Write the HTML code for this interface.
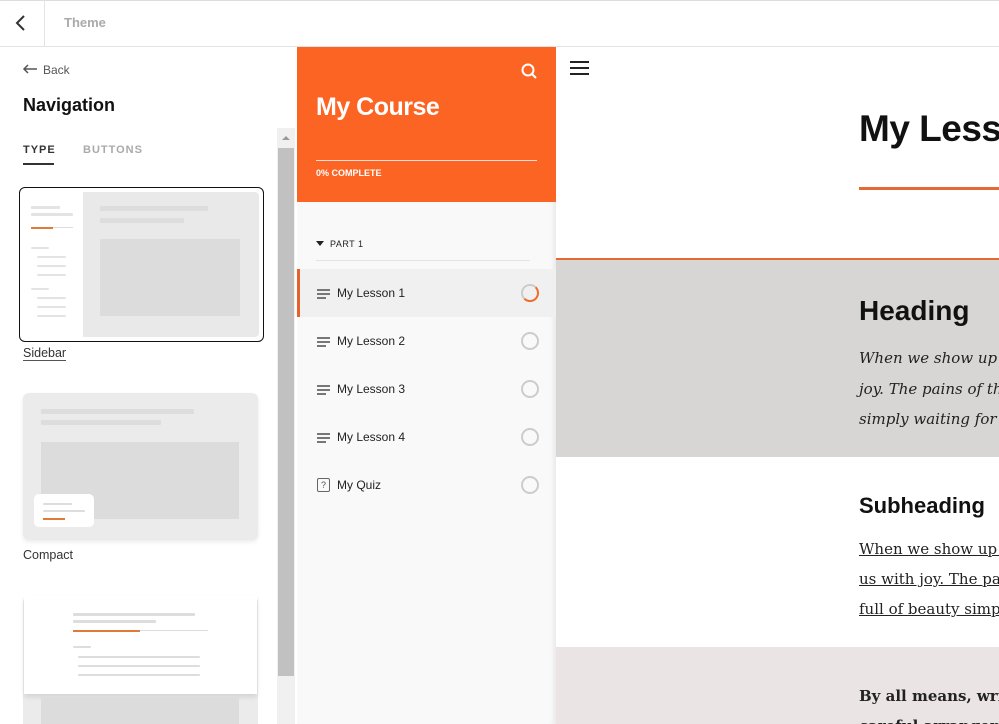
<!DOCTYPE html>
<html><head><meta charset="utf-8"><style>
*{box-sizing:border-box;margin:0;padding:0}
html,body{width:999px;height:724px;overflow:hidden}
body{position:relative;font-family:"Liberation Sans",sans-serif;background:#fff}
.abs{position:absolute}
.bar{background:#e3e3e3;height:5px;position:absolute;border-radius:1px}
.serif{font-family:"DejaVu Serif","Liberation Serif",serif}
.les{position:absolute;left:297px;width:259px;height:48px;font-size:12px;color:#222}
.les .ic{position:absolute;left:20px;top:20px;width:13px}
.les .ic i{display:block;height:1.5px;background:#777;margin-bottom:2.5px}
.les span{position:absolute;left:40px;top:17px}
.les .c{position:absolute;left:224px;top:15px;width:18px;height:18px;border:2px solid #ccc;border-radius:50%}
#content{position:absolute;left:556px;top:47px;width:443px;height:677px;overflow:hidden}
</style></head><body>
<div class="abs" style="left:0;top:0;width:999px;height:47px;border-top:1px solid #ddd;border-bottom:1px solid #e3e3e3"></div>
<div class="abs" style="left:44px;top:0;width:1px;height:47px;background:#e3e3e3"></div>
<svg class="abs" style="left:14px;top:14px" width="14" height="18"><path d="M10 2 L3 9 L10 16" stroke="#333" stroke-width="2" fill="none"/></svg>
<div class="abs" style="left:64px;top:15px;font-size:13px;color:#aaa;font-weight:bold">Theme</div>
<svg class="abs" style="left:22px;top:63px" width="16" height="12"><path d="M15 6H2 M6 2 L2 6 L6 10" stroke="#555" stroke-width="1.5" fill="none"/></svg>
<div class="abs" style="left:43px;top:63px;font-size:12px;color:#555">Back</div>
<div class="abs" style="left:23px;top:95px;font-size:18px;font-weight:bold;color:#111">Navigation</div>
<div class="abs" style="left:23px;top:144px;font-size:11px;font-weight:bold;letter-spacing:1px;color:#333">TYPE</div>
<div class="abs" style="left:23px;top:163px;width:31px;height:1.5px;background:#333"></div>
<div class="abs" style="left:83px;top:144px;font-size:11px;font-weight:bold;letter-spacing:1px;color:#aaa">BUTTONS</div>
<div class="abs" style="left:277px;top:128px;width:18px;height:596px;background:#f0f0f0"></div>
<div class="abs" style="left:278px;top:148px;width:16px;height:528px;background:#c1c1c1"></div>
<svg class="abs" style="left:281px;top:135px" width="10" height="6"><path d="M1 5 L5 1 L9 5Z" fill="#999"/></svg>
<div class="abs" style="left:19px;top:187px;width:245px;height:155px;border:1.5px solid #111;border-radius:6px;background:#fff"></div>
<div class="abs" style="left:83px;top:192px;width:176px;height:145px;background:#e9e9e9;border-radius:0 4px 4px 0"></div>
<div class="bar" style="left:100px;top:206px;width:108px;background:#ddd"></div>
<div class="bar" style="left:100px;top:218px;width:84px;background:#ddd"></div>
<div class="abs" style="left:100px;top:239px;width:140px;height:77px;background:#dcdcdc"></div>
<div class="bar" style="left:31px;top:206px;width:29px;height:3px"></div>
<div class="bar" style="left:31px;top:213px;width:42px;height:3px"></div>
<div class="abs" style="left:31px;top:227px;width:22px;height:2px;background:#e07a3c"></div>
<div class="abs" style="left:53px;top:227px;width:20px;height:1px;background:#ddd"></div>
<div class="bar" style="left:31px;top:247px;width:18px;height:2px"></div>
<div class="bar" style="left:37px;top:256px;width:29px;height:2px"></div>
<div class="bar" style="left:37px;top:265px;width:29px;height:2px"></div>
<div class="bar" style="left:37px;top:274px;width:29px;height:2px"></div>
<div class="bar" style="left:31px;top:288px;width:18px;height:2px"></div>
<div class="bar" style="left:37px;top:297px;width:29px;height:2px"></div>
<div class="bar" style="left:37px;top:306px;width:29px;height:2px"></div>
<div class="bar" style="left:37px;top:315px;width:29px;height:2px"></div>
<div class="abs" style="left:23px;top:346px;font-size:12.5px;color:#333;border-bottom:1.5px solid #555">Sidebar</div>
<div class="abs" style="left:23px;top:393px;width:235px;height:147px;background:#ebebeb;border-radius:6px;box-shadow:0 2px 4px rgba(0,0,0,.08)"></div>
<div class="bar" style="left:41px;top:409px;width:153px;background:#ddd"></div>
<div class="bar" style="left:41px;top:420px;width:120px;background:#ddd"></div>
<div class="abs" style="left:41px;top:442px;width:198px;height:77px;background:#dcdcdc"></div>
<div class="abs" style="left:34px;top:494px;width:60px;height:33px;background:#fff;border-radius:5px"></div>
<div class="bar" style="left:43px;top:503px;width:29px;height:2px;background:#ddd"></div>
<div class="bar" style="left:43px;top:510px;width:42px;height:2px;background:#ddd"></div>
<div class="abs" style="left:43px;top:518px;width:22px;height:2px;background:#e07a3c"></div>
<div class="abs" style="left:23px;top:548px;font-size:12.5px;color:#333">Compact</div>
<div class="abs" style="left:23px;top:596px;width:235px;height:128px;background:#ebebeb;border-radius:6px 6px 0 0"></div>
<div class="abs" style="left:24px;top:596px;width:233px;height:98px;background:#fff;box-shadow:0 3px 5px rgba(0,0,0,.1)"></div>
<div class="bar" style="left:73px;top:613px;width:122px;height:3px;background:#ddd"></div>
<div class="bar" style="left:73px;top:620px;width:83px;height:3px;background:#ddd"></div>
<div class="abs" style="left:73px;top:630px;width:67px;height:2px;background:#e07a3c"></div>
<div class="abs" style="left:140px;top:630px;width:68px;height:1px;background:#ddd"></div>
<div class="bar" style="left:73px;top:646px;width:18px;height:2px;background:#ddd"></div>
<div class="bar" style="left:78px;top:656px;width:122px;height:2px;background:#ddd"></div>
<div class="bar" style="left:78px;top:665px;width:122px;height:2px;background:#ddd"></div>
<div class="bar" style="left:78px;top:674px;width:122px;height:2px;background:#ddd"></div>
<div class="abs" style="left:41px;top:697px;width:198px;height:27px;background:#dcdcdc"></div>
<div class="abs" style="left:297px;top:47px;width:259px;height:677px;background:#f9f9f9;box-shadow:inset -6px 0 6px -4px rgba(0,0,0,.08)"></div>
<div class="abs" style="left:297px;top:47px;width:259px;height:155px;background:#fc6423"></div>
<svg class="abs" style="left:521px;top:63px" width="17" height="17"><circle cx="7" cy="7" r="5.5" stroke="#fff" stroke-width="2" fill="none"/><path d="M11 11 L15 15" stroke="#fff" stroke-width="2"/></svg>
<div class="abs" style="left:316px;top:93px;font-size:25px;font-weight:bold;color:#fff;letter-spacing:-0.5px">My Course</div>
<div class="abs" style="left:316px;top:160px;width:221px;height:1px;background:#fdd"></div>
<div class="abs" style="left:316px;top:168px;font-size:9px;font-weight:bold;color:#fff">0% COMPLETE</div>
<svg class="abs" style="left:316px;top:241px" width="8" height="6"><path d="M0 0H8L4 5Z" fill="#222"/></svg>
<div class="abs" style="left:330px;top:239px;font-size:9px;color:#222;letter-spacing:.5px">PART 1</div>
<div class="abs" style="left:316px;top:260px;width:214px;height:1px;background:#e3e3e3"></div>
<div class="les" style="top:269px;background:#f0f0f0"><div class="abs" style="left:0;top:0;width:3px;height:48px;background:#e5622a"></div><div class="ic"><i></i><i></i><i style="width:9px"></i></div><span>My Lesson 1</span><div class="c" style="border-right-color:#f06a2a;border-bottom-color:#f06a2a"></div></div>
<div class="les" style="top:317px"><div class="ic"><i></i><i></i><i style="width:9px"></i></div><span>My Lesson 2</span><div class="c"></div></div>
<div class="les" style="top:365px"><div class="ic"><i></i><i></i><i style="width:9px"></i></div><span>My Lesson 3</span><div class="c"></div></div>
<div class="les" style="top:413px"><div class="ic"><i></i><i></i><i style="width:9px"></i></div><span>My Lesson 4</span><div class="c"></div></div>
<div class="les" style="top:461px"><div class="abs" style="left:20px;top:17px;width:13px;height:14px;border:1.3px solid #666;border-radius:2px;font-size:9px;text-align:center;line-height:12px;color:#555">?</div><span>My Quiz</span><div class="c"></div></div>
<div id="content">
<svg class="abs" style="left:14px;top:13px" width="19" height="16"><path d="M0 2H19M0 8H19M0 14H19" stroke="#222" stroke-width="2"/></svg>
<div class="abs" style="left:303px;top:61px;font-size:37px;font-weight:bold;color:#111;white-space:nowrap;letter-spacing:-0.5px">My Lesson</div>
<div class="abs" style="left:303px;top:140px;width:140px;height:3px;background:#e36a35"></div>
<div class="abs" style="left:0;top:211px;width:443px;height:2px;background:#e36a35"></div>
<div class="abs" style="left:0;top:213px;width:443px;height:197px;background:#d8d5d5"></div>
<div class="abs" style="left:303px;top:248px;font-size:28px;font-weight:bold;color:#111">Heading</div>
<div class="abs serif" style="left:303px;top:296px;font-size:15px;font-style:italic;line-height:30.5px;color:#222;white-space:nowrap">When we show up to<br>joy. The pains of the<br>simply waiting for our</div>
<div class="abs" style="left:303px;top:446px;font-size:22px;font-weight:bold;color:#111">Subheading</div>
<div class="abs serif" style="left:303px;top:487px;font-size:15px;text-decoration:underline;line-height:30px;color:#222;white-space:nowrap">When we show up to<br>us with joy. The pains<br>full of beauty simply</div>
<div class="abs" style="left:0;top:600px;width:443px;height:77px;background:#ebe4e4"></div>
<div class="abs serif" style="left:303px;top:634px;font-size:15px;font-weight:bold;line-height:30px;color:#222;white-space:nowrap">By all means, write<br>careful arrangement</div>
</div>
</body></html>
